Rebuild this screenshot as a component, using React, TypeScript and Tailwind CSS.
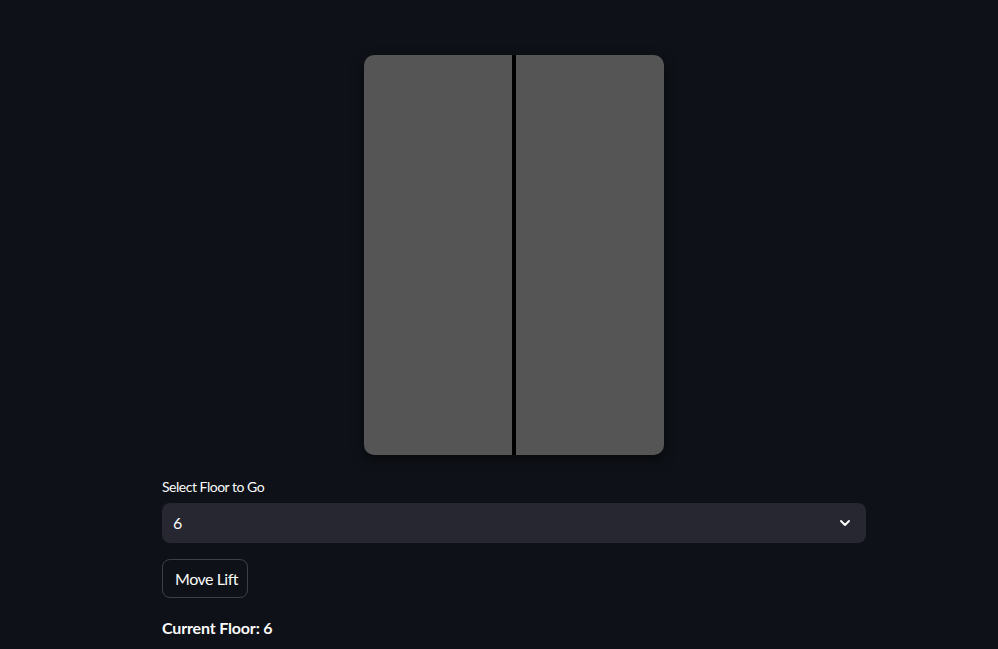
import { ChevronDown } from "lucide-react"

export default function App() {
  return (
    <div
      className="min-h-screen bg-[#0e1117] text-[#fafafa] tracking-[-0.03em]"
      style={{ fontFamily: '"Source Sans Pro", Lato, "Noto Sans", sans-serif' }}
    >
      <div className="ml-[162px] w-[704px] pt-[55px]">
        {/* Lift */}
        <div className="flex justify-center">
          <div className="flex h-[400px] w-[300px] overflow-hidden rounded-[10px] bg-[#555555] shadow-[0_4px_12px_rgba(0,0,0,0.5)]">
            <div className="flex-1" />
            <div className="w-[4px] bg-black" />
            <div className="flex-1" />
          </div>
        </div>

        {/* Floor select */}
        <div className="mt-[23px]">
          <label className="block text-[14px] leading-[18px]">Select Floor to Go</label>
          <div className="mt-[7px] flex h-[40px] items-center justify-between rounded-[8px] bg-[#262730] pl-[11px] pr-[13px]">
            <span className="text-[16px]">6</span>
            <ChevronDown size={16} strokeWidth={3} />
          </div>
        </div>

        <button className="mt-[16px] flex h-[39px] items-center rounded-[8px] border border-[rgba(250,250,250,0.2)] pl-[12px] pr-[9px] text-[16px]">
          Move Lift
        </button>

        <p className="mt-[18px] text-[16px] font-bold tracking-[-0.01em]">Current Floor: 6</p>
      </div>
    </div>
  )
}
